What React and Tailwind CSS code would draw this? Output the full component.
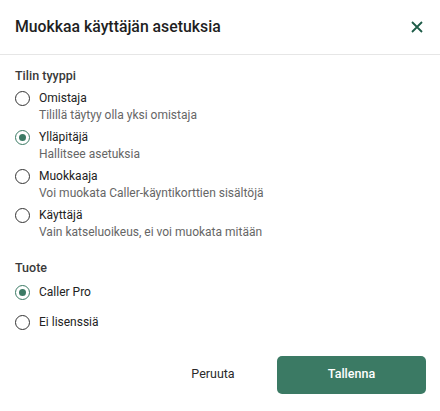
import { useState } from 'react'

const roles = [
  { id: 'owner', label: 'Omistaja', desc: 'Tilillä täytyy olla yksi omistaja' },
  { id: 'admin', label: 'Ylläpitäjä', desc: 'Hallitsee asetuksia' },
  { id: 'editor', label: 'Muokkaaja', desc: 'Voi muokata Caller-käyntikorttien sisältöjä' },
  { id: 'user', label: 'Käyttäjä', desc: 'Vain katseluoikeus, ei voi muokata mitään' },
]

const products = [
  { id: 'pro', label: 'Caller Pro' },
  { id: 'none', label: 'Ei lisenssiä' },
]

function Radio({ checked }) {
  return (
    <span
      className={
        'flex h-[15px] w-[15px] shrink-0 items-center justify-center rounded-full border-[1.5px] ' +
        (checked ? 'border-[#3b7a64]' : 'border-[#333]')
      }
    >
      {checked && <span className="h-[7px] w-[7px] rounded-full bg-[#3b7a64]" />}
    </span>
  )
}

export default function App() {
  const [role, setRole] = useState('admin')
  const [product, setProduct] = useState('pro')

  return (
    <div className="h-[411px] w-[440px] bg-white text-[#222] font-['Roboto',sans-serif]">
      <div className="flex h-[55px] items-center justify-between border-b border-[#e6e6e6] pl-[15px] pr-[16px]">
        <h2 className="text-[15.8px] font-medium text-[#1f1f1f]">Muokkaa käyttäjän asetuksia</h2>
        <button className="text-[#1e5c48]">
          <svg width="14" height="14" viewBox="0 0 14 14" fill="none" stroke="currentColor" strokeWidth="1.8">
            <path d="M2 2l10 10M12 2L2 12" />
          </svg>
        </button>
      </div>

      <div className="px-[15px] pt-[12px]">
        <div className="text-[12.5px] font-medium text-[#3a3a3a]">Tilin tyyppi</div>
        <div className="mt-[4px] flex flex-col gap-[5px]">
          {roles.map(r => (
            <button key={r.id} onClick={() => setRole(r.id)} className="flex items-start gap-[9px] text-left">
              <span className="mt-[1px]"><Radio checked={role === r.id} /></span>
              <span className="flex flex-col text-[12px] leading-[17px]">
                <span className="text-[#222]">{r.label}</span>
                <span className="text-[#666]">{r.desc}</span>
              </span>
            </button>
          ))}
        </div>

        <div className="mt-[18px] text-[12.5px] font-medium text-[#3a3a3a]">Tuote</div>
        <div className="mt-[6px] flex flex-col gap-[13px]">
          {products.map(p => (
            <button key={p.id} onClick={() => setProduct(p.id)} className="flex items-center gap-[9px] text-left">
              <Radio checked={product === p.id} />
              <span className="text-[12px] leading-[17px] text-[#222]">{p.label}</span>
            </button>
          ))}
        </div>
      </div>

      <div className="mt-[25px] flex items-center justify-end gap-[14px] pr-[14px]">
        <button className="h-[38px] w-[100px] text-[12.5px] text-[#2a2a2a]">Peruuta</button>
        <button className="h-[38px] w-[149px] rounded-[5px] bg-[#3b7a64] text-[12.5px] font-medium text-white">Tallenna</button>
      </div>
    </div>
  )
}
